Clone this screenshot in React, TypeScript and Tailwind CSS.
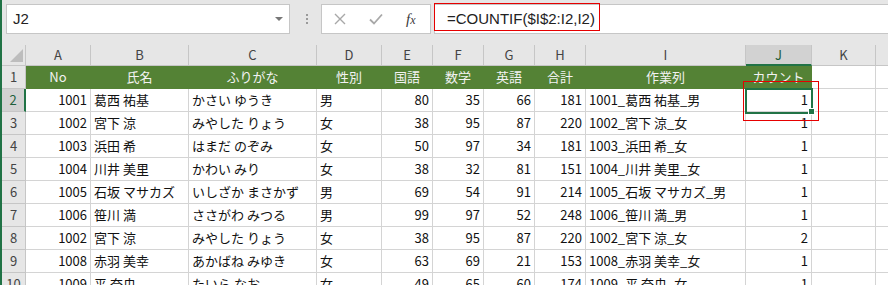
import React from 'react';

type Row = (string | number)[];

const widths = [
  'w-[65px]',
  'w-[98px]',
  'w-[128px]',
  'w-[65px]',
  'w-[51px]',
  'w-[51px]',
  'w-[51px]',
  'w-[51px]',
  'w-[160px]',
  'w-[66px]',
  'w-[64px]',
];
const letters = ['A', 'B', 'C', 'D', 'E', 'F', 'G', 'H', 'I', 'J', 'K'];
const headers = ['No', '氏名', 'ふりがな', '性別', '国語', '数学', '英語', '合計', '作業列', 'カウント'];

const rows: Row[] = [
  [1001, '葛西 祐基', 'かさい ゆうき', '男', 80, 35, 66, 181, '1001_葛西 祐基_男', 1],
  [1002, '宮下 涼', 'みやした りょう', '女', 38, 95, 87, 220, '1002_宮下 涼_女', 1],
  [1003, '浜田 希', 'はまだ のぞみ', '女', 50, 97, 34, 181, '1003_浜田 希_女', 1],
  [1004, '川井 美里', 'かわい みり', '女', 38, 32, 81, 151, '1004_川井 美里_女', 1],
  [1005, '石坂 マサカズ', 'いしざか まさかず', '男', 69, 54, 91, 214, '1005_石坂 マサカズ_男', 1],
  [1006, '笹川 満', 'ささがわ みつる', '男', 99, 97, 52, 248, '1006_笹川 満_男', 1],
  [1002, '宮下 涼', 'みやした りょう', '女', 38, 95, 87, 220, '1002_宮下 涼_女', 2],
  [1008, '赤羽 美幸', 'あかばね みゆき', '女', 63, 69, 21, 153, '1008_赤羽 美幸_女', 1],
  [1009, '平 奈央', 'たいら なお', '女', 49, 65, 60, 174, '1009_平 奈央_女', 1],
];

function FormulaBar() {
  return (
    <div className="flex h-[45px] items-start pt-[4px]">
      {/* name box */}
      <div className="ml-[4px] flex h-[30px] w-[284px] items-center justify-between border border-[#c6c6c6] bg-white pl-[6px] pr-[6px]">
        <span className="font-['Liberation_Sans',sans-serif] text-[15px] text-[#222]">J2</span>
        <span className="h-0 w-0 border-x-[4px] border-t-[4px] border-x-transparent border-t-[#777]" />
      </div>

      <div className="ml-[16px] mt-[10px] flex flex-col gap-[2px]">
        <span className="h-[2px] w-[2px] bg-[#9a9a9a]" />
        <span className="h-[2px] w-[2px] bg-[#9a9a9a]" />
        <span className="h-[2px] w-[2px] bg-[#9a9a9a]" />
      </div>

      {/* cancel / enter / fx */}
      <div className="ml-[13px] flex h-[30px] w-[110px] items-center gap-[23px] border border-[#c6c6c6] bg-white pl-[12px]">
        <svg width="12" height="12" viewBox="0 0 12 12">
          <path d="M1 1L11 11M11 1L1 11" stroke="#a8a8a8" strokeWidth="1.4" fill="none" />
        </svg>
        <svg width="14" height="12" viewBox="0 0 14 12">
          <path d="M1 6.5L5 10.5L13 1.5" stroke="#a8a8a8" strokeWidth="1.8" fill="none" />
        </svg>
        <span className="font-['Liberation_Serif',serif] text-[15px] italic leading-none text-[#3a3a3a]">
          f<span className="text-[12px]">x</span>
        </span>
      </div>

      <div className="ml-[3px] flex h-[30px] flex-1 items-center border-y border-l border-[#c6c6c6] bg-white pl-[12px]">
        <span className="font-['Liberation_Sans',sans-serif] text-[15px] text-[#222]">=COUNTIF($I$2:I2,I2)</span>
      </div>
    </div>
  );
}

function ColumnHeaders() {
  return (
    <div className="flex h-[21px]">
      <div className="flex w-[24px] shrink-0 items-end justify-end border-r border-b border-[#c6c6c6] bg-[#e6e6e6] pb-[3px] pr-[2px]">
        <svg width="13" height="13" viewBox="0 0 13 13">
          <path d="M13 0L13 13L0 13Z" fill="#bdbdbd" />
        </svg>
      </div>
      {letters.map((l, i) => (
        <div
          key={l}
          className={
            l === 'J'
              ? `${widths[i]} shrink-0 border-r border-b-2 border-r-[#c6c6c6] border-b-[#217346] bg-[#d2d2d2] text-center text-[13px] leading-[20px] text-[#1f5f3a]`
              : `${widths[i]} shrink-0 border-r border-b border-[#c6c6c6] bg-[#e6e6e6] text-center text-[13px] leading-[20px] text-[#444]`
          }
        >
          {l}
        </div>
      ))}
      <div className="flex-1 border-b border-[#c6c6c6] bg-[#e6e6e6]" />
    </div>
  );
}

function RowHead({ n, active }: { n: number; active?: boolean }) {
  return (
    <div
      className={
        active
          ? 'w-[24px] shrink-0 border-r-2 border-b border-r-[#217346] border-b-[#c6c6c6] bg-[#d2d2d2] text-center text-[13px] leading-[22px] text-[#1f5f3a]'
          : 'w-[24px] shrink-0 border-r border-b border-[#c6c6c6] bg-[#e6e6e6] text-center text-[13px] leading-[22px] text-[#444]'
      }
    >
      {n}
    </div>
  );
}

function TitleRow() {
  return (
    <div className="flex h-[23px]">
      <RowHead n={1} />
      {headers.map((h, i) => (
        <div
          key={h}
          className={`${widths[i]} shrink-0 overflow-hidden whitespace-nowrap border-r border-b border-[#548235] bg-[#548235] text-center text-[13px] leading-[22px] text-[#f2f2f2]`}
        >
          {h}
        </div>
      ))}
      <div className={`${widths[10]} shrink-0 border-r border-b border-[#d4d4d4] bg-white`} />
      <div className="flex-1 border-b border-[#d4d4d4] bg-white" />
    </div>
  );
}

function DataRow({ row, n }: { row: Row; n: number }) {
  return (
    <div className="flex h-[23px]">
      <RowHead n={n} active={n === 2} />
      {row.map((v, i) => (
        <div
          key={i}
          className={`${widths[i]} shrink-0 overflow-hidden whitespace-nowrap border-r border-b border-[#d4d4d4] bg-white px-[3px] text-[13px] leading-[22px] text-[#111] ${
            typeof v === 'number' ? 'text-right' : 'text-left'
          }`}
        >
          {v}
        </div>
      ))}
      <div className={`${widths[10]} shrink-0 border-r border-b border-[#d4d4d4] bg-white`} />
      <div className="flex-1 border-b border-[#d4d4d4] bg-white" />
    </div>
  );
}

export default function App() {
  return (
    <div className="relative h-[285px] w-[888px] overflow-hidden border-l-2 border-[#217346] bg-[#e6e6e6] font-['Noto_Sans_CJK_JP',sans-serif]">
      <FormulaBar />
      <ColumnHeaders />
      <TitleRow />
      {rows.map((r, i) => (
        <DataRow key={i} row={r} n={i + 2} />
      ))}

      {/* active cell J2 */}
      <div className="pointer-events-none absolute left-[743px] top-[88px] h-[26px] w-[68px] border-2 border-[#217346]" />
      <div className="pointer-events-none absolute left-[806px] top-[108px] h-[7px] w-[7px] border border-white bg-[#217346]" />

      {/* red annotations */}
      <div className="pointer-events-none absolute left-[432px] top-[3px] h-[28px] w-[166px] border border-[#e60000]" />
      <div className="pointer-events-none absolute left-[741px] top-[81px] h-[40px] w-[76px] border border-[#e60000]" />
    </div>
  );
}
